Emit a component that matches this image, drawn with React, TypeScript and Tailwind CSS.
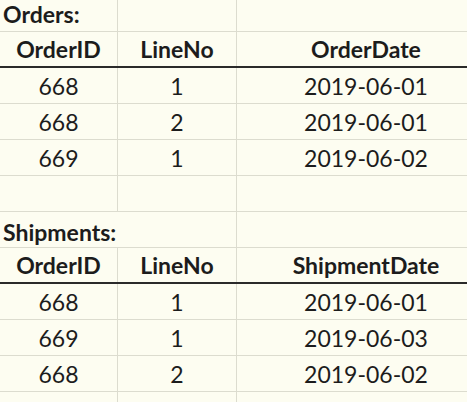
import React from "react";

type Cell = { text?: string; bold?: boolean; align?: "left" | "center" };

function Row({
  cells,
  h,
  thick,
  spanFirst,
}: {
  cells: Cell[];
  h: string;
  thick?: boolean;
  spanFirst?: boolean;
}) {
  const border = thick ? "border-b-2 border-b-[#2a2a2a]" : "border-b border-b-[#dcdccf]";
  if (spanFirst) {
    return (
      <div className={`grid grid-cols-[237px_1fr] ${h} ${border}`}>
        <div className="flex items-end pb-[3px] pl-[3px] border-r border-r-[#dcdccf] font-bold text-[23px] leading-none whitespace-nowrap">
          {cells[0].text}
        </div>
        <div />
      </div>
    );
  }
  return (
    <div className={`grid grid-cols-[118px_119px_1fr] ${h} ${border}`}>
      {cells.map((c, i) => (
        <div
          key={i}
          className={`flex items-end pb-[5px] ${
            i < 2 ? "border-r border-r-[#dcdccf]" : ""
          } ${c.align === "left" ? "justify-start pl-[3px]" : "justify-center"} ${
            c.bold ? "font-bold" : ""
          } ${i === 2 ? "w-[258px]" : ""} text-[23px] leading-none whitespace-nowrap`}
        >
          {c.text}
        </div>
      ))}
    </div>
  );
}

export default function App() {
  return (
    <div
      className="w-[467px] h-[402px] overflow-hidden bg-[#fdfdf1] text-[#1c1c1c]"
      style={{ fontFamily: "Lato, 'Open Sans', sans-serif" }}
    >
      <Row h="h-[32px]" cells={[{ text: "Orders:", bold: true, align: "left" }, {}, {}]} />
      <Row
        h="h-[36px]"
        thick
        cells={[
          { text: "OrderID", bold: true },
          { text: "LineNo", bold: true },
          { text: "OrderDate", bold: true },
        ]}
      />
      <Row h="h-[36px]" cells={[{ text: "668" }, { text: "1" }, { text: "2019-06-01" }]} />
      <Row h="h-[36px]" cells={[{ text: "668" }, { text: "2" }, { text: "2019-06-01" }]} />
      <Row h="h-[36px]" cells={[{ text: "669" }, { text: "1" }, { text: "2019-06-02" }]} />
      <Row h="h-[36px]" cells={[{}, {}, {}]} />
      <Row h="h-[36px]" spanFirst cells={[{ text: "Shipments:" }]} />
      <Row
        h="h-[36px]"
        thick
        cells={[
          { text: "OrderID", bold: true },
          { text: "LineNo", bold: true },
          { text: "ShipmentDate", bold: true },
        ]}
      />
      <Row h="h-[36px]" cells={[{ text: "668" }, { text: "1" }, { text: "2019-06-01" }]} />
      <Row h="h-[36px]" cells={[{ text: "669" }, { text: "1" }, { text: "2019-06-03" }]} />
      <Row h="h-[36px]" cells={[{ text: "668" }, { text: "2" }, { text: "2019-06-02" }]} />
      <Row h="h-[36px]" cells={[{}, {}, {}]} />
    </div>
  );
}
